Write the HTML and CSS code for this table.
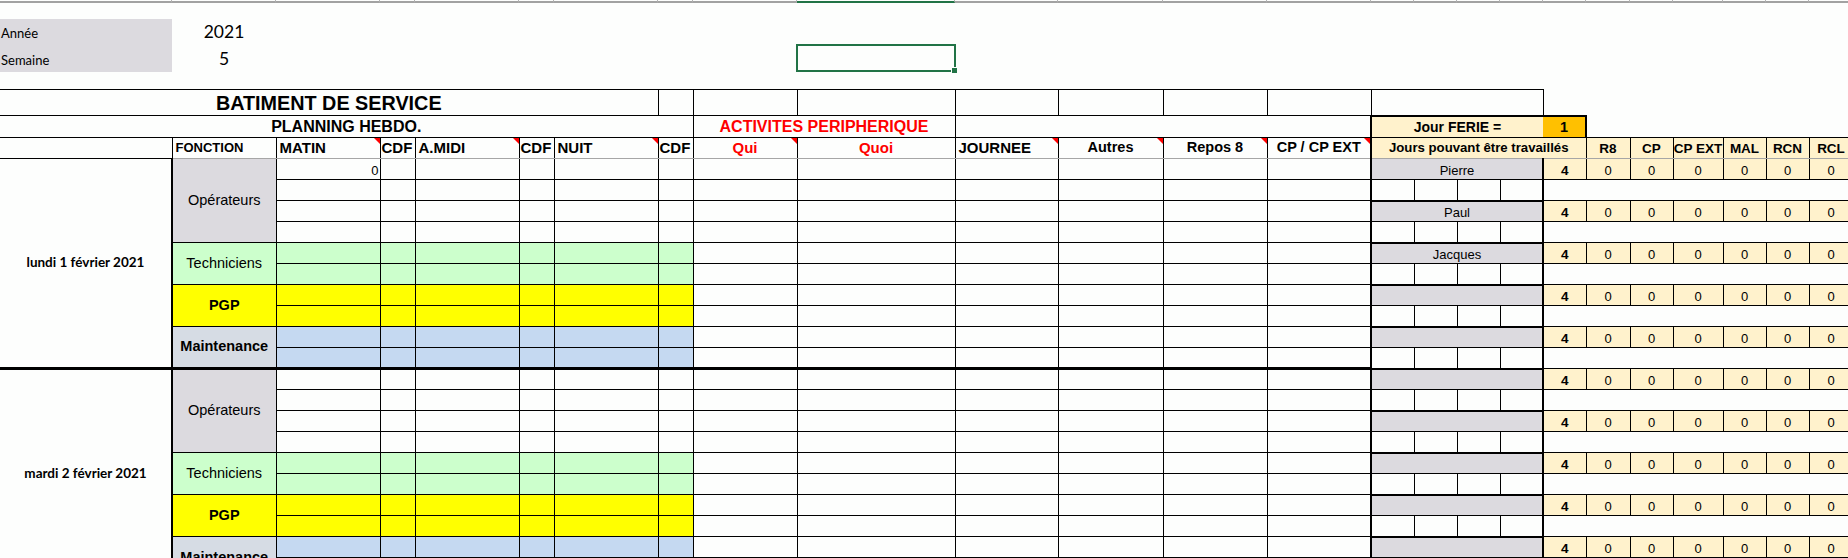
FILE: index.html
```html
<!DOCTYPE html>
<html lang="fr">
<head>
<meta charset="utf-8">
<title>Planning hebdo</title>
<link rel="stylesheet" href="styles.css">
</head>
<body>
<div class="colbar">
  <span class="c172"></span><span class="c104"></span><span class="c104"></span><span class="c35"></span><span class="c104"></span><span class="c35"></span><span class="c104"></span><span class="c35"></span><span class="c104"></span><span class="c158 on"></span><span class="c103"></span><span class="c105"></span><span class="c104"></span><span class="c104"></span><span class="c43"></span><span class="c43"></span><span class="c43"></span><span class="c43"></span><span class="c43"></span><span class="c44"></span><span class="c43"></span><span class="c50"></span><span class="c43"></span><span class="c43"></span><span class="c44"></span>
</div>

<div class="meta">
  <div class="lbl">Année</div><div class="val">2021</div>
  <div class="lbl">Semaine</div><div class="val">5</div>
</div>

<div class="selbox"></div>

<table class="sheet">
  <colgroup>
    <col class="c172"><col class="c104"><col class="c104"><col class="c35"><col class="c104"><col class="c35"><col class="c104"><col class="c35"><col class="c104"><col class="c158"><col class="c103"><col class="c105"><col class="c104"><col class="c104"><col class="c43"><col class="c43"><col class="c43"><col class="c43"><col class="c43"><col class="c44"><col class="c43"><col class="c50"><col class="c43"><col class="c43"><col class="c44">
  </colgroup>
  <tr class="ra">
    <td colspan="7" class="l0 title">BATIMENT DE SERVICE</td>
    <td></td><td></td><td></td><td></td><td></td><td></td><td></td>
    <td colspan="4"></td>
    <td colspan="7" class="blank"></td>
  </tr>
  <tr class="rb">
    <td colspan="8" class="l0 sub">PLANNING HEBDO.</td>
    <td colspan="2" class="sub red">ACTIVITES PERIPHERIQUE</td>
    <td colspan="4"></td>
    <td colspan="4" class="ferie">Jour FERIE =</td>
    <td class="ferie-val">1</td>
    <td colspan="6" class="blank"></td>
  </tr>
  <tr class="rc">
    <td class="l0"></td>
    <td class="hd fon">FONCTION</td>
    <td class="hd cm">MATIN</td>
    <td class="hd cdf">CDF</td>
    <td class="hd cm">A.MIDI</td>
    <td class="hd cdf">CDF</td>
    <td class="hd cm">NUIT</td>
    <td class="hd cdf">CDF</td>
    <td class="hd ctr red cm">Qui</td>
    <td class="hd ctr red">Quoi</td>
    <td class="hd cm">JOURNEE</td>
    <td class="hd ctr sm cm">Autres</td>
    <td class="hd ctr sm cm">Repos 8</td>
    <td class="hd ctr sm cm">CP / CP EXT</td>
    <td colspan="5" class="jours">Jours pouvant être travaillés</td>
    <td class="ab">R8</td><td class="ab">CP</td><td class="ab">CP EXT</td><td class="ab">MAL</td><td class="ab">RCN</td><td class="ab">RCL</td>
  </tr>

  <!-- Jour 1 -->
  <tr class="g-op">
    <td rowspan="10" class="l0 date">lundi 1 février 2021</td>
    <td rowspan="4" class="fn op">Opérateurs</td>
    <td class="s num">0</td><td class="s"></td><td class="s"></td><td class="s"></td><td class="s"></td><td class="s"></td>
    <td></td><td></td><td></td><td></td><td></td><td></td>
    <td colspan="4" class="name first">Pierre</td><td class="cnt">4</td><td class="z">0</td><td class="z">0</td><td class="z">0</td><td class="z">0</td><td class="z">0</td><td class="z">0</td>
  </tr>
  <tr class="g-op">
    <td class="s"></td><td class="s"></td><td class="s"></td><td class="s"></td><td class="s"></td><td class="s"></td>
    <td></td><td></td><td></td><td></td><td></td><td></td>
    <td class="slot sl"></td><td class="slot"></td><td class="slot"></td><td class="slot sr"></td><td colspan="7" class="blank"></td>
  </tr>
  <tr class="g-op">
    <td class="s"></td><td class="s"></td><td class="s"></td><td class="s"></td><td class="s"></td><td class="s"></td>
    <td></td><td></td><td></td><td></td><td></td><td></td>
    <td colspan="4" class="name">Paul</td><td class="cnt">4</td><td class="z">0</td><td class="z">0</td><td class="z">0</td><td class="z">0</td><td class="z">0</td><td class="z">0</td>
  </tr>
  <tr class="g-op">
    <td class="s"></td><td class="s"></td><td class="s"></td><td class="s"></td><td class="s"></td><td class="s"></td>
    <td></td><td></td><td></td><td></td><td></td><td></td>
    <td class="slot sl"></td><td class="slot"></td><td class="slot"></td><td class="slot sr"></td><td colspan="7" class="blank"></td>
  </tr>
  <tr class="g-tech">
    <td rowspan="2" class="fn tech">Techniciens</td>
    <td class="s"></td><td class="s"></td><td class="s"></td><td class="s"></td><td class="s"></td><td class="s"></td>
    <td></td><td></td><td></td><td></td><td></td><td></td>
    <td colspan="4" class="name">Jacques</td><td class="cnt">4</td><td class="z">0</td><td class="z">0</td><td class="z">0</td><td class="z">0</td><td class="z">0</td><td class="z">0</td>
  </tr>
  <tr class="g-tech">
    <td class="s"></td><td class="s"></td><td class="s"></td><td class="s"></td><td class="s"></td><td class="s"></td>
    <td></td><td></td><td></td><td></td><td></td><td></td>
    <td class="slot sl"></td><td class="slot"></td><td class="slot"></td><td class="slot sr"></td><td colspan="7" class="blank"></td>
  </tr>
  <tr class="g-pgp">
    <td rowspan="2" class="fn pgp">PGP</td>
    <td class="s"></td><td class="s"></td><td class="s"></td><td class="s"></td><td class="s"></td><td class="s"></td>
    <td></td><td></td><td></td><td></td><td></td><td></td>
    <td colspan="4" class="name"></td><td class="cnt">4</td><td class="z">0</td><td class="z">0</td><td class="z">0</td><td class="z">0</td><td class="z">0</td><td class="z">0</td>
  </tr>
  <tr class="g-pgp">
    <td class="s"></td><td class="s"></td><td class="s"></td><td class="s"></td><td class="s"></td><td class="s"></td>
    <td></td><td></td><td></td><td></td><td></td><td></td>
    <td class="slot sl"></td><td class="slot"></td><td class="slot"></td><td class="slot sr"></td><td colspan="7" class="blank"></td>
  </tr>
  <tr class="g-mnt">
    <td rowspan="2" class="fn mnt">Maintenance</td>
    <td class="s"></td><td class="s"></td><td class="s"></td><td class="s"></td><td class="s"></td><td class="s"></td>
    <td></td><td></td><td></td><td></td><td></td><td></td>
    <td colspan="4" class="name"></td><td class="cnt">4</td><td class="z">0</td><td class="z">0</td><td class="z">0</td><td class="z">0</td><td class="z">0</td><td class="z">0</td>
  </tr>
  <tr class="g-mnt">
    <td class="s"></td><td class="s"></td><td class="s"></td><td class="s"></td><td class="s"></td><td class="s"></td>
    <td></td><td></td><td></td><td></td><td></td><td></td>
    <td class="slot sl"></td><td class="slot"></td><td class="slot"></td><td class="slot sr"></td><td colspan="7" class="blank"></td>
  </tr>

  <!-- Jour 2 -->
  <tr class="g-op sep">
    <td rowspan="10" class="l0 date">mardi 2 février 2021</td>
    <td rowspan="4" class="fn op">Opérateurs</td>
    <td class="s"></td><td class="s"></td><td class="s"></td><td class="s"></td><td class="s"></td><td class="s"></td>
    <td></td><td></td><td></td><td></td><td></td><td></td>
    <td colspan="4" class="name"></td><td class="cnt">4</td><td class="z">0</td><td class="z">0</td><td class="z">0</td><td class="z">0</td><td class="z">0</td><td class="z">0</td>
  </tr>
  <tr class="g-op">
    <td class="s"></td><td class="s"></td><td class="s"></td><td class="s"></td><td class="s"></td><td class="s"></td>
    <td></td><td></td><td></td><td></td><td></td><td></td>
    <td class="slot sl"></td><td class="slot"></td><td class="slot"></td><td class="slot sr"></td><td colspan="7" class="blank"></td>
  </tr>
  <tr class="g-op">
    <td class="s"></td><td class="s"></td><td class="s"></td><td class="s"></td><td class="s"></td><td class="s"></td>
    <td></td><td></td><td></td><td></td><td></td><td></td>
    <td colspan="4" class="name"></td><td class="cnt">4</td><td class="z">0</td><td class="z">0</td><td class="z">0</td><td class="z">0</td><td class="z">0</td><td class="z">0</td>
  </tr>
  <tr class="g-op">
    <td class="s"></td><td class="s"></td><td class="s"></td><td class="s"></td><td class="s"></td><td class="s"></td>
    <td></td><td></td><td></td><td></td><td></td><td></td>
    <td class="slot sl"></td><td class="slot"></td><td class="slot"></td><td class="slot sr"></td><td colspan="7" class="blank"></td>
  </tr>
  <tr class="g-tech">
    <td rowspan="2" class="fn tech">Techniciens</td>
    <td class="s"></td><td class="s"></td><td class="s"></td><td class="s"></td><td class="s"></td><td class="s"></td>
    <td></td><td></td><td></td><td></td><td></td><td></td>
    <td colspan="4" class="name"></td><td class="cnt">4</td><td class="z">0</td><td class="z">0</td><td class="z">0</td><td class="z">0</td><td class="z">0</td><td class="z">0</td>
  </tr>
  <tr class="g-tech">
    <td class="s"></td><td class="s"></td><td class="s"></td><td class="s"></td><td class="s"></td><td class="s"></td>
    <td></td><td></td><td></td><td></td><td></td><td></td>
    <td class="slot sl"></td><td class="slot"></td><td class="slot"></td><td class="slot sr"></td><td colspan="7" class="blank"></td>
  </tr>
  <tr class="g-pgp">
    <td rowspan="2" class="fn pgp">PGP</td>
    <td class="s"></td><td class="s"></td><td class="s"></td><td class="s"></td><td class="s"></td><td class="s"></td>
    <td></td><td></td><td></td><td></td><td></td><td></td>
    <td colspan="4" class="name"></td><td class="cnt">4</td><td class="z">0</td><td class="z">0</td><td class="z">0</td><td class="z">0</td><td class="z">0</td><td class="z">0</td>
  </tr>
  <tr class="g-pgp">
    <td class="s"></td><td class="s"></td><td class="s"></td><td class="s"></td><td class="s"></td><td class="s"></td>
    <td></td><td></td><td></td><td></td><td></td><td></td>
    <td class="slot sl"></td><td class="slot"></td><td class="slot"></td><td class="slot sr"></td><td colspan="7" class="blank"></td>
  </tr>
  <tr class="g-mnt">
    <td rowspan="2" class="fn mnt">Maintenance</td>
    <td class="s"></td><td class="s"></td><td class="s"></td><td class="s"></td><td class="s"></td><td class="s"></td>
    <td></td><td></td><td></td><td></td><td></td><td></td>
    <td colspan="4" class="name"></td><td class="cnt">4</td><td class="z">0</td><td class="z">0</td><td class="z">0</td><td class="z">0</td><td class="z">0</td><td class="z">0</td>
  </tr>
  <tr class="g-mnt">
    <td class="s"></td><td class="s"></td><td class="s"></td><td class="s"></td><td class="s"></td><td class="s"></td>
    <td></td><td></td><td></td><td></td><td></td><td></td>
    <td class="slot sl"></td><td class="slot"></td><td class="slot"></td><td class="slot sr"></td><td colspan="7" class="blank"></td>
  </tr>
</table>
</body>
</html>
```

FILE: styles.css
```css
html, body {
  margin: 0;
  padding: 0;
  width: 1848px;
  height: 558px;
  overflow: hidden;
  background: #fdfefd;
}
body {
  position: relative;
  font-family: "Liberation Sans", Arial, sans-serif;
  color: #000;
}

/* column widths */
.c172 { width: 172px; }
.c104 { width: 104px; }
.c35 { width: 35px; }
.c158 { width: 158px; }
.c103 { width: 103px; }
.c105 { width: 105px; }
.c43 { width: 43px; }
.c44 { width: 44px; }
.c50 { width: 50px; }

/* column header strip at the very top */
.colbar {
  display: flex;
  height: 3px;
  width: 1853px;
}
.colbar span {
  flex: none;
  box-sizing: border-box;
  height: 3px;
  border-right: 1px solid #b4b4b4;
  border-bottom: 2px solid #a2a2a2;
}
.colbar span.on {
  border-bottom-color: #217346;
}

/* Année / Semaine */
.meta {
  display: grid;
  grid-template-columns: 172px 104px;
  grid-template-rows: 26px 27px;
  margin-top: 16px;
  font-family: Lato, "Liberation Sans", sans-serif;
}
.lbl {
  background: #dcdadf;
  font-size: 13px;
  display: flex;
  align-items: flex-end;
  padding: 0 0 4px 1px;
  box-sizing: border-box;
}
.val {
  font-size: 17.5px;
  display: flex;
  align-items: flex-end;
  justify-content: center;
  padding-bottom: 3px;
  box-sizing: border-box;
}

/* selected cell */
.selbox {
  position: absolute;
  left: 796px;
  top: 44px;
  width: 160px;
  height: 28px;
  box-sizing: border-box;
  border: 2px solid #217346;
}
.selbox::after {
  content: "";
  position: absolute;
  right: -3px;
  bottom: -3px;
  width: 5px;
  height: 5px;
  background: #217346;
  border-top: 1px solid #fdfefd;
  border-left: 1px solid #fdfefd;
}

/* spreadsheet table */
.sheet {
  border-collapse: collapse;
  table-layout: fixed;
  width: 1853px;
  margin-top: 17px;
}
.sheet td {
  border: 1px solid #000;
  padding: 0 2px 1px 2px;
  vertical-align: bottom;
  white-space: nowrap;
  overflow: hidden;
  font-size: 13px;
  line-height: 15px;
}
.ra { height: 26px; }
.rb { height: 22px; }
.rc { height: 21px; }
.g-op, .g-tech, .g-pgp, .g-mnt { height: 21px; }

.sheet td.l0 { border-left: none; }
.sheet td.blank { border: none; }

.sheet td.title {
  text-align: center;
  font-weight: bold;
  font-size: 19.8px;
  line-height: 22px;
  padding-left: 0;
  padding-right: 0;
}
.sheet td.sub {
  text-align: center;
  font-weight: bold;
  font-size: 16px;
  line-height: 18px;
}
.sheet td.red { color: #ff0000; }

.sheet td.ferie {
  background: #fff2cc;
  font-weight: bold;
  font-size: 14px;
  line-height: 17px;
  text-align: center;
  border-top: 2px solid #000;
  border-left: 2px solid #000;
  border-right: none;
}
.sheet td.ferie-val {
  background: #ffc000;
  font-weight: bold;
  font-size: 14.5px;
  line-height: 17px;
  text-align: center;
  border-top: 2px solid #000;
  border-right: 2px solid #000;
  border-left: none;
}

/* header row */
.rc td { border-bottom-color: #a6a6a6; }
.sheet .rc td.l0 { border-bottom-color: #000; }
.sheet td.hd {
  font-weight: bold;
  font-size: 15px;
  line-height: 17px;
  padding: 0 1px 2px 3px;
}
.sheet td.fon { font-size: 13px; }
.sheet td.cdf { padding-left: 1px; }
.sheet td.ctr { text-align: center; padding-left: 1px; }
.sheet td.sm { font-size: 14.5px; }
.sheet td.cm { position: relative; }
.sheet td.cm::after {
  content: "";
  position: absolute;
  top: 0;
  right: 0;
  width: 0;
  height: 0;
  border-top: 6px solid #ff0000;
  border-left: 6px solid transparent;
}
.sheet td.jours {
  background: #fff2cc;
  font-weight: bold;
  font-size: 13.2px;
  text-align: center;
  border-left: 2px solid #000;
  padding-bottom: 3px;
}
.sheet td.ab {
  background: #fff2cc;
  font-weight: bold;
  font-size: 13.5px;
  text-align: center;
  padding: 0 0 2px 0;
}

/* left data */
.sheet td.date {
  font-family: Lato, "Liberation Sans", sans-serif;
  font-weight: bold;
  font-size: 13.5px;
  text-align: center;
  vertical-align: middle;
}
.sheet td.fn {
  border-left: 2px solid #000;
  text-align: center;
  vertical-align: middle;
  font-size: 14.5px;
  line-height: 17px;
}
.sheet td.op { background: #dcdadf; }
.sheet td.tech { background: #ccffcc; }
.sheet td.pgp { background: #ffff00; font-weight: bold; }
.sheet td.mnt { background: #d6dce4; font-weight: bold; }

.g-tech td.s { background: #ccffcc; }
.g-pgp td.s { background: #ffff00; }
.g-mnt td.s { background: #c5d9f1; }
.sheet td.num { text-align: right; padding-right: 1px; }

/* right block */
.sheet td.name {
  background: #dcdadf;
  text-align: center;
  border-top: 2px solid #000;
  border-left: 2px solid #000;
  border-right: 2px solid #000;
}
.sheet td.name.first { border-top: 1px solid #a6a6a6; }
.sheet td.sl { border-left: 2px solid #000; }
.sheet td.sr { border-right: 2px solid #000; }
.sheet td.cnt {
  background: #fff2cc;
  font-weight: bold;
  font-size: 13.5px;
  text-align: center;
  padding: 0 0 1px 0;
}
.sheet td.z {
  background: #fff2cc;
  text-align: center;
  padding: 0 0 1px 0;
}

/* day separator */
.sheet .sep > td { border-top: 3px solid #000; }
.sheet .sep > td.name { border-top-width: 2px; }
.sheet .sep > td.cnt,
.sheet .sep > td.z { border-top-width: 1px; }
```
